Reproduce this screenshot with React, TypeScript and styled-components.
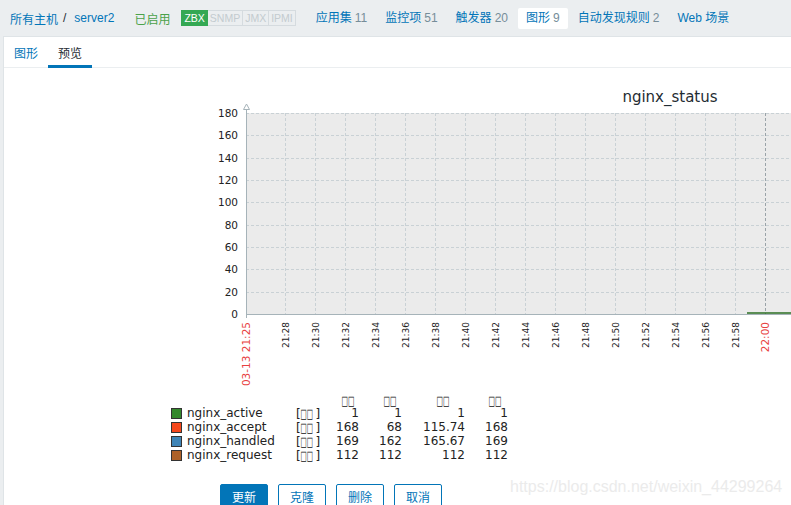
import React from 'react'
import styled, { createGlobalStyle } from 'styled-components'

const GlobalStyle = createGlobalStyle`
  html, body {
    margin: 0;
    padding: 0;
  }
  body {
    background: #ebeef0;
    font-family: "Liberation Sans", "Noto Sans CJK SC", sans-serif;
    font-size: 12px;
    color: #1f2c33;
    overflow: hidden;
  }
`

const Page = styled.div`
  position: relative;
  width: 791px;
  height: 505px;
  overflow: hidden;
`

const TopBar = styled.div`
  display: flex;
  align-items: center;
  height: 36px;
  padding-left: 10px;
  white-space: nowrap;
`

const Crumb = styled.a`
  color: #0275b8;
  text-decoration: none;
`

const Sep = styled.span`
  margin: 0 8px 0 5px;
  color: #1f2c33;
`

const Status = styled.span`
  color: #4aa24a;
  margin-left: 20px;
`

const Badges = styled.div`
  display: flex;
  margin: 0 12px 0 11px;
`

const Badge = styled.span<{ $on?: boolean }>`
  display: inline-flex;
  align-items: center;
  height: 14px;
  padding: 0 2px;
  font-size: 10.5px;
  border: 1px solid ${p => (p.$on ? '#34a853' : '#d5dbdf')};
  background: ${p => (p.$on ? '#34a853' : 'transparent')};
  color: ${p => (p.$on ? '#fff' : '#c3cbcf')};

  & + & {
    border-left: none;
  }
`

const NavList = styled.div`
  display: flex;
  gap: 2px;
`

const NavItem = styled.a<{ $selected?: boolean }>`
  padding: 0 8px;
  line-height: 21px;
  border-radius: 2px;
  color: #0275b8;
  text-decoration: none;
  background: ${p => (p.$selected ? '#fff' : 'transparent')};
`

const Count = styled.span`
  color: #768d99;
  margin-left: 3px;
`

const Panel = styled.div`
  margin-left: 3px;
  height: 469px;
  background: #fff;
  border-left: 1px solid #dfe4e7;
  border-top: 1px solid #dfe4e7;
`

const TabBar = styled.div`
  display: flex;
  height: 30px;
  border-bottom: 1px solid #ebeef0;
`

const Tab = styled.a<{ $active?: boolean }>`
  display: flex;
  align-items: center;
  box-sizing: border-box;
  height: 31px;
  padding: 2px 10px 0;
  margin-bottom: -1px;
  color: ${p => (p.$active ? '#1f2c33' : '#0275b8')};
  border-bottom: 3px solid ${p => (p.$active ? '#0275b8' : 'transparent')};
  text-decoration: none;
`

const ChartBlock = styled.div`
  margin-top: 12px;
  padding-left: 156px;
`

const ChartSvg = styled.svg`
  display: block;
  font-family: "DejaVu Sans", sans-serif;
`

const Title = styled.text`
  font-size: 15px;
  fill: #1f2c33;
`

const AxisLabel = styled.text`
  font-size: 10.5px;
  fill: #222;
`

const TimeLabel = styled.text<{ $mark?: boolean }>`
  font-size: ${p => (p.$mark ? '10.5px' : '9px')};
  fill: ${p => (p.$mark ? '#e8413f' : '#222')};
`

const LegendText = styled.text`
  font-size: 12px;
  fill: #222;
`

const Tofu = styled.text`
  font-size: 13px;
  font-weight: bold;
  fill: #111;
`

const ButtonRow = styled.div`
  display: flex;
  gap: 10px;
  margin-top: 12px;
  padding-left: 216px;
`

const Button = styled.button<{ $primary?: boolean }>`
  height: 24px;
  padding: 0 11px;
  font-family: "Noto Sans CJK SC", sans-serif;
  font-size: 12px;
  border-radius: 2px;
  border: 1px solid #0275b8;
  background: ${p => (p.$primary ? '#0275b8' : '#fff')};
  color: ${p => (p.$primary ? '#fff' : '#0275b8')};
  cursor: pointer;
`

const Watermark = styled.div`
  position: absolute;
  left: 510px;
  top: 478px;
  font-family: "Liberation Sans", sans-serif;
  font-size: 16px;
  color: #ebebeb;
  pointer-events: none;
`

const PLOT = { left: 86, top: 33, bottom: 234, right: 631 }
const yOf = (v: number) => PLOT.bottom - (v / 180) * (PLOT.bottom - PLOT.top)

const series = [
  { name: 'nginx_active', color: '#33882c', vals: ['1', '1', '1', '1'] },
  { name: 'nginx_accept', color: '#f4471c', vals: ['168', '68', '115.74', '168'] },
  { name: 'nginx_handled', color: '#3f84b6', vals: ['169', '162', '165.67', '169'] },
  { name: 'nginx_request', color: '#ad6128', vals: ['112', '112', '112', '112'] },
]

const colRight = [199, 242, 305, 348]
const colHead = [188, 230, 283, 335]

const pad = (n: number) => String(n).padStart(2, '0')

const Chart: React.FC = () => {
  const grid = []
  for (let v = 20; v <= 180; v += 20) {
    const y = Math.round(yOf(v)) + 0.5
    grid.push(<line key={'h' + v} x1={PLOT.left} x2={PLOT.right} y1={y} y2={y} stroke="#c9d1d5" strokeDasharray="3 2" />)
  }
  const times = []
  for (let k = 0; k <= 17; k++) {
    const x = 125 + 30 * k + 0.5
    const mins = 28 + 2 * k
    const h = 21 + Math.floor(mins / 60)
    const label = `${h}:${pad(mins % 60)}`
    const mark = label === '22:00'
    grid.push(
      <line key={'v' + k} x1={x} x2={x} y1={PLOT.top} y2={PLOT.bottom} stroke={mark ? '#9aa3a8' : '#c9d1d5'} strokeDasharray="3 2" />
    )
    const bx = x + (mark ? 3.8 : 3.3)
    times.push(
      <TimeLabel key={'t' + k} $mark={mark} x={bx} y={242} textAnchor="end" transform={`rotate(-90 ${bx} 242)`}>
        {label}
      </TimeLabel>
    )
  }

  return (
    <ChartSvg width={631} height={392} viewBox="0 0 631 392">
      <Title x={510} y={22} textAnchor="middle">nginx_status</Title>
      <rect x={PLOT.left} y={PLOT.top} width={PLOT.right - PLOT.left} height={PLOT.bottom - PLOT.top} fill="#ebebeb" />
      {grid}
      {[180, 160, 140, 120, 100, 80, 60, 40, 20, 0].map(v => (
        <AxisLabel key={v} x={78} y={Math.round(yOf(v)) + 4} textAnchor="end">{v}</AxisLabel>
      ))}
      <line x1={86.5} x2={86.5} y1={29} y2={238} stroke="#a6b3b9" />
      <polygon points="83.5,29.5 86.5,24 89.5,29.5" fill="#fff" stroke="#a6b3b9" />
      <line x1={PLOT.left} x2={PLOT.right} y1={234.5} y2={234.5} stroke="#a6b3b9" />
      <line x1={587} x2={631} y1={233} y2={233} stroke="#2a6e22" strokeWidth={1.5} />
      <TimeLabel $mark x={89.8} y={242} textAnchor="end" transform="rotate(-90 89.8 242)">03-13 21:25</TimeLabel>
      {times}

      {colHead.map((cx, i) => (
        <Tofu key={'hd' + i} x={cx - 6.5} y={324.5} textLength={13} lengthAdjust="spacingAndGlyphs">□□</Tofu>
      ))}
      {series.map((s, r) => {
        const base = 337 + r * 14
        return (
          <g key={s.name}>
            <rect x={11.5} y={base - 8.5} width={10} height={10} fill={s.color} stroke="#333" />
            <LegendText x={27} y={base}>{s.name}</LegendText>
            <LegendText x={136} y={base + 1}>[</LegendText>
            <Tofu x={140.5} y={base + 0.5} textLength={12.5} lengthAdjust="spacingAndGlyphs">□□</Tofu>
            <LegendText x={155.5} y={base + 1}>]</LegendText>
            {s.vals.map((v, i) => (
              <LegendText key={i} x={colRight[i]} y={base} textAnchor="end">{v}</LegendText>
            ))}
          </g>
        )
      })}
    </ChartSvg>
  )
}

const App: React.FC = () => {
  return (
    <Page>
      <GlobalStyle />
      <TopBar>
        <Crumb href="#">所有主机</Crumb>
        <Sep>/</Sep>
        <Crumb href="#">server2</Crumb>
        <Status>已启用</Status>
        <Badges>
          <Badge $on>ZBX</Badge>
          <Badge>SNMP</Badge>
          <Badge>JMX</Badge>
          <Badge>IPMI</Badge>
        </Badges>
        <NavList>
          <NavItem href="#">应用集<Count>11</Count></NavItem>
          <NavItem href="#">监控项<Count>51</Count></NavItem>
          <NavItem href="#">触发器<Count>20</Count></NavItem>
          <NavItem href="#" $selected>图形<Count>9</Count></NavItem>
          <NavItem href="#">自动发现规则<Count>2</Count></NavItem>
          <NavItem href="#">Web 场景</NavItem>
        </NavList>
      </TopBar>
      <Panel>
        <TabBar>
          <Tab href="#">图形</Tab>
          <Tab href="#" $active>预览</Tab>
        </TabBar>
        <ChartBlock>
          <Chart />
        </ChartBlock>
        <ButtonRow>
          <Button $primary>更新</Button>
          <Button>克隆</Button>
          <Button>删除</Button>
          <Button>取消</Button>
        </ButtonRow>
      </Panel>
      <Watermark>https://blog.csdn.net/weixin_44299264</Watermark>
    </Page>
  )
}

export default App
